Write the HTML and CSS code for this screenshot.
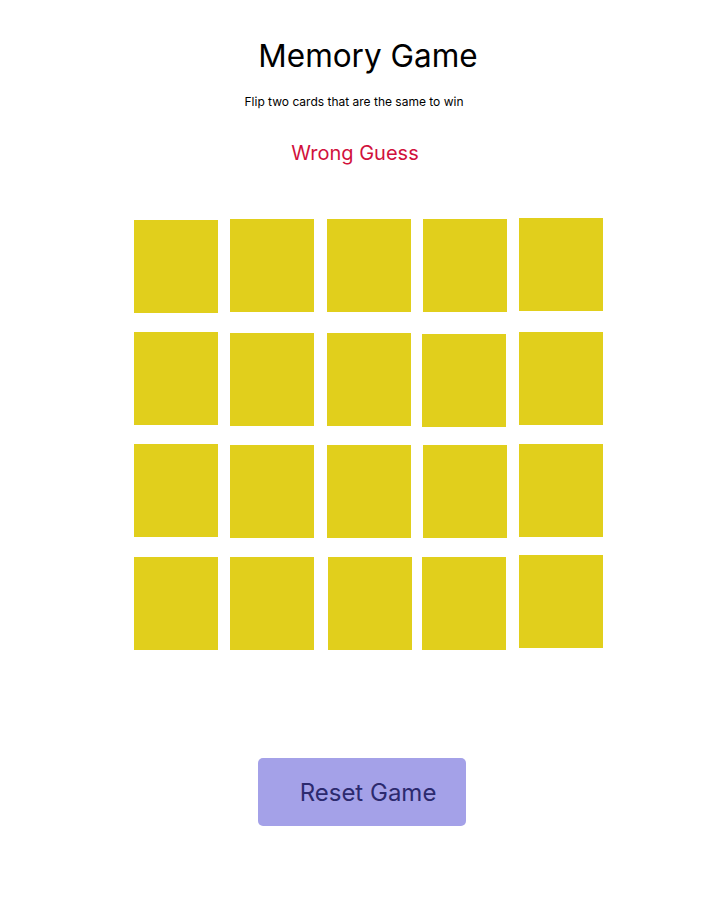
FILE: index.html
```html
<!DOCTYPE html>
<html>
<head>
<meta charset="utf-8">
<link rel="stylesheet" href="styles.css">
</head>
<body>
<main class="app">
  <h1 class="title">Memory Game</h1>
  <p class="subtitle">Flip two cards that are the same to win</p>
  <p class="status">Wrong Guess</p>
  <div class="board">
    <div class="card"></div><div class="card"></div><div class="card"></div><div class="card"></div><div class="card"></div>
    <div class="card"></div><div class="card"></div><div class="card"></div><div class="card"></div><div class="card"></div>
    <div class="card"></div><div class="card"></div><div class="card"></div><div class="card"></div><div class="card"></div>
    <div class="card"></div><div class="card"></div><div class="card"></div><div class="card"></div><div class="card"></div>
  </div>
  <button class="reset">Reset Game</button>
</main>
</body>
</html>
```
FILE: styles.css
```css
html, body {
  margin: 0;
  padding: 0;
  background: #ffffff;
}
body {
  font-family: Inter, "Noto Sans", sans-serif;
  color: #000;
}
.app {
  display: flex;
  flex-direction: column;
  align-items: center;
  width: 728px;
}
.title {
  margin: 36px 0 0 8px;
  font-size: 31.5px;
  font-weight: 400;
  line-height: 40px;
}
.subtitle {
  margin: 18px 0 0 -20px;
  font-size: 12px;
  line-height: 16px;
}
.status {
  margin: 31px 0 0 -18px;
  font-size: 20px;
  line-height: 24px;
  color: #d1113c;
}
.board {
  margin: 54px 0 0 8px;
  display: grid;
  grid-template-columns: repeat(5, 84px);
  grid-auto-rows: 93px;
  column-gap: 12px;
  row-gap: 19.5px;
}
.card {
  background: #e1cf1c;
}
.card:nth-child(1) { transform: translateY(1px); }
.card:nth-child(3) { transform: translateX(1px); }
.card:nth-child(4) { transform: translateX(1px); }
.card:nth-child(5) { transform: translate(1px, -1px); }
.card:nth-child(7) { transform: translateY(1px); }
.card:nth-child(8) { transform: translate(1px, 1px); }
.card:nth-child(9) { transform: translateY(2px); }
.card:nth-child(10) { transform: translateX(1px); }
.card:nth-child(12) { transform: translateY(1px); }
.card:nth-child(13) { transform: translate(1px, 1px); }
.card:nth-child(14) { transform: translate(1px, 1px); }
.card:nth-child(15) { transform: translateX(1px); }
.card:nth-child(18) { transform: translateX(2px); }
.card:nth-child(20) { transform: translate(1px, -2px); }
.reset {
  margin: 108.5px 0 0 -4px;
  width: 208px;
  height: 68px;
  border: none;
  border-radius: 5px;
  background: #a4a1e8;
  color: #2c2a6e;
  font-family: Inter, "Noto Sans", sans-serif;
  font-size: 24px;
  padding: 0 0 0 12px;
}
```
